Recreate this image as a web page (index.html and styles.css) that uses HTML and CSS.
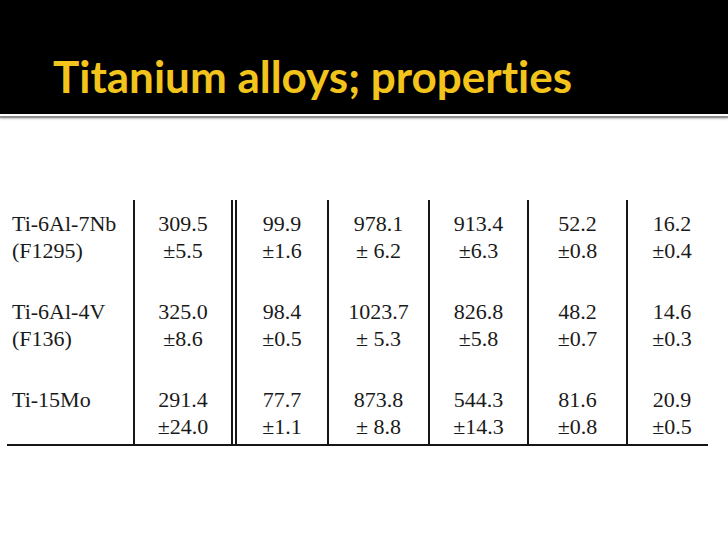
FILE: index.html
```html
<!DOCTYPE html>
<html>
<head>
<meta charset="utf-8">
<link rel="stylesheet" href="styles.css">
</head>
<body>
<header class="header">
  <h1 class="title">Titanium alloys; properties</h1>
</header>
<div class="rule"></div>
<div class="table">
  <div class="cell c1">Ti-6Al-7Nb<br>(F1295)</div>
  <div class="cell c2">309.5<br>±5.5</div>
  <div class="cell c3">99.9<br>±1.6</div>
  <div class="cell c4">978.1<br>± 6.2</div>
  <div class="cell c5">913.4<br>±6.3</div>
  <div class="cell c6">52.2<br>±0.8</div>
  <div class="cell c7">16.2<br>±0.4</div>

  <div class="cell c1">Ti-6Al-4V<br>(F136)</div>
  <div class="cell c2">325.0<br>±8.6</div>
  <div class="cell c3">98.4<br>±0.5</div>
  <div class="cell c4">1023.7<br>± 5.3</div>
  <div class="cell c5">826.8<br>±5.8</div>
  <div class="cell c6">48.2<br>±0.7</div>
  <div class="cell c7">14.6<br>±0.3</div>

  <div class="cell c1 last">Ti-15Mo</div>
  <div class="cell c2 last">291.4<br>±24.0</div>
  <div class="cell c3 last">77.7<br>±1.1</div>
  <div class="cell c4 last">873.8<br>± 8.8</div>
  <div class="cell c5 last">544.3<br>±14.3</div>
  <div class="cell c6 last">81.6<br>±0.8</div>
  <div class="cell c7 last">20.9<br>±0.5</div>
</div>
</body>
</html>
```
FILE: styles.css
```css
html, body {
  margin: 0;
  padding: 0;
  background: #ffffff;
}
body {
  width: 728px;
  height: 546px;
  overflow: hidden;
}
.header {
  height: 114px;
  background: #000000;
  box-sizing: border-box;
  padding: 54px 0 0 53px;
}
.title {
  margin: 0;
  font-family: "Lato", "Open Sans", sans-serif;
  font-weight: 700;
  font-size: 44px;
  line-height: 44px;
  color: #f2c41c;
  letter-spacing: 0;
  font-variant-ligatures: none;
  font-feature-settings: "liga" 0, "dlig" 0;
}
.rule {
  margin-top: 2px;
  height: 2px;
  background: #8f8f8f;
  box-shadow: 0 1px 2px rgba(0,0,0,0.25);
}
.table {
  margin: 82px 0 0 7px;
  width: 701px;
  display: grid;
  grid-template-columns: 126px 98px 96px 101px 99px 99px 82px;
  border-bottom: 2px solid #161616;
  font-family: "Liberation Serif", "Times New Roman", serif;
  font-size: 22px;
  line-height: 27px;
  color: #1a1a1a;
}
.cell {
  box-sizing: border-box;
  padding: 10px 0 24px 0;
  text-align: center;
  border-left: 2px solid #161616;
  height: 88px;
}
.cell.last {
  height: 68px;
  padding-bottom: 4px;
}
.c1 {
  border-left: none;
  text-align: left;
  padding-left: 5px;
}
.c3 {
  border-left: 6px double #161616;
}
.c7 {
  padding-left: 8px;
}
```
